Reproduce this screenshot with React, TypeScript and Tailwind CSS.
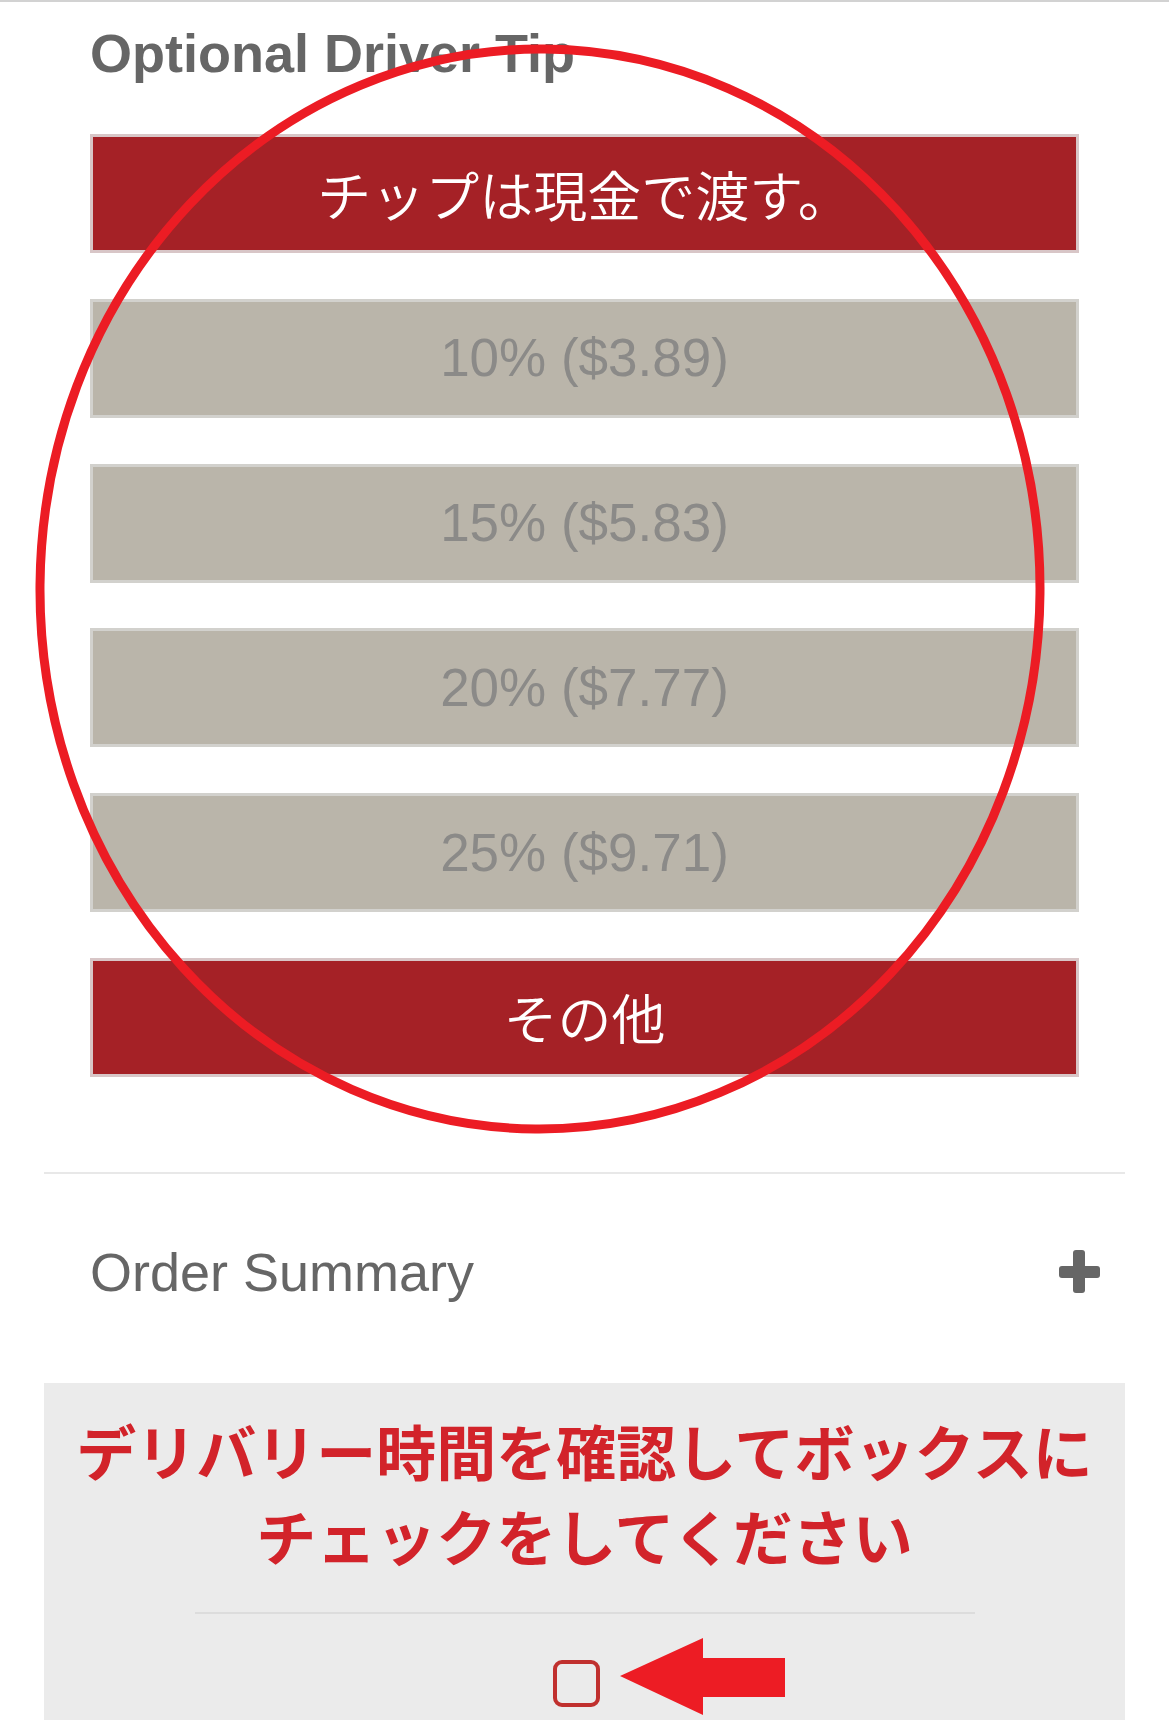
import React from 'react';

type TipOption = {
  id: string;
  label: string;
  selected: boolean;
};

const TIP_OPTIONS: TipOption[] = [
  { id: 'cash', label: 'チップは現金で渡す。', selected: true },
  { id: 'p10', label: '10% ($3.89)', selected: false },
  { id: 'p15', label: '15% ($5.83)', selected: false },
  { id: 'p20', label: '20% ($7.77)', selected: false },
  { id: 'p25', label: '25% ($9.71)', selected: false },
  { id: 'other', label: 'その他', selected: true },
];

function TipButton({ opt }: { opt: TipOption }) {
  const isJa = /[^\x00-\x7f]/.test(opt.label);
  return (
    <button
      type="button"
      className={
        opt.selected
          ? 'h-[119px] w-full flex items-center justify-center border-[3px] border-[#d8c6c7] bg-[#a52126] text-white'
          : 'h-[119px] w-full flex items-center justify-center border-[3px] border-[#d2d1cd] bg-[#bab5aa] text-[#8b8a88]'
      }
    >
      <span
        className={
          isJa
            ? "text-[54px] leading-[64px] font-[350] [font-family:'Noto_Sans_CJK_JP',sans-serif]"
            : "text-[53px] leading-[64px] font-normal [font-family:'Liberation_Sans',Arial,sans-serif]"
        }
      >
        {opt.label}
      </span>
    </button>
  );
}

function PlusIcon() {
  return (
    <svg width="41" height="43" viewBox="0 0 41 43" className="shrink-0">
      <rect x="0" y="16" width="41" height="12" rx="3" fill="#666666" />
      <rect x="14" y="0" width="12" height="43" rx="3" fill="#666666" />
    </svg>
  );
}

function LeftArrow() {
  return (
    <svg
      width="165"
      height="77"
      viewBox="0 0 165 77"
      className="absolute left-[67px] top-[-22px] pointer-events-none"
    >
      <polygon points="0,38 83,0 83,20 165,20 165,59 83,59 83,77" fill="#ed1c24" />
    </svg>
  );
}

export default function App() {
  return (
    <div className="relative min-h-screen w-[1169px] bg-white border-t-2 border-[#d2d2d2] overflow-hidden [font-family:'Liberation_Sans',Arial,sans-serif]">
      <div className="px-[44px]">
        {/* driver tip */}
        <section className="px-[46px] pt-[19px] pb-[95px]">
          <h2 className="text-[54px] leading-[64px] font-bold text-[#666666]">Optional Driver Tip</h2>
          <div className="mt-[49px] flex flex-col gap-[45.8px]">
            {TIP_OPTIONS.map(o => (
              <TipButton key={o.id} opt={o} />
            ))}
          </div>
        </section>

        <div className="h-[2px] bg-[#e8e8e8]" />

        {/* order summary */}
        <div className="flex items-center justify-between pl-[46px] pr-[25px] pt-[66px] pb-[79px]">
          <span className="text-[54px] leading-[64px] text-[#666666]">Order Summary</span>
          <PlusIcon />
        </div>

        {/* delivery time confirm */}
        <div className="bg-[#ebebeb] px-[20px] pt-[24px] pb-[40px]">
          <p className="text-center text-[60px] leading-[85px] font-bold text-[#d2232a] [font-family:'Noto_Sans_CJK_JP',sans-serif]">
            デリバリー時間を確認してボックスに
            <br />
            チェックをしてください
          </p>
          <div className="mx-auto mt-[35px] h-[2px] w-[780px] bg-[#dcdcdc]" />
          <div className="mt-[46px] flex justify-center">
            <div className="relative mr-[17px]">
              <input
                type="checkbox"
                aria-label="delivery time confirmed"
                className="block h-[47px] w-[47px] appearance-none rounded-[9px] border-[4px] border-[#c0302e] bg-transparent"
              />
              <LeftArrow />
            </div>
          </div>
        </div>
      </div>

      {/* hand-drawn highlight circle */}
      <svg
        width="1169"
        height="1720"
        viewBox="0 0 1169 1720"
        className="absolute left-0 top-0 pointer-events-none"
      >
        <ellipse
          cx="540"
          cy="587"
          rx="500"
          ry="540"
          transform="rotate(0.5 540 587)"
          fill="none"
          stroke="#ec1c24"
          strokeWidth="9"
        />
      </svg>
    </div>
  );
}
